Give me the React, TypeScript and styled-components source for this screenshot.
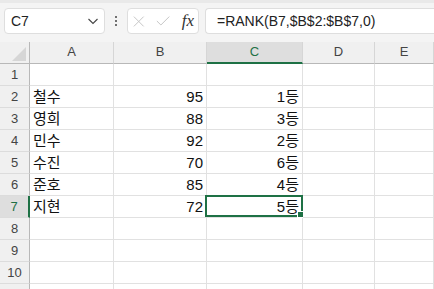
import React from 'react';
import styled, { createGlobalStyle, css } from 'styled-components';

const GREEN = '#1e7145';

const GlobalStyle = createGlobalStyle`
    body {
        margin: 0;
        background: #ffffff;
        font-family: "Liberation Sans", "Noto Sans CJK KR", sans-serif;
        overflow: hidden;
    }
`;

const Toolbar = styled.div`
    display: flex;
    align-items: flex-start;
    padding: 5px 0 0 4px;
    box-sizing: border-box;
    height: 42px;
    border-top: 3px solid #e9e9e9;
    background: #f4f4f4;
`;

const Box = styled.div`
    display: flex;
    align-items: center;
    height: 26px;
    box-sizing: border-box;
    background: #ffffff;
    border: 1px solid #dedede;
    border-radius: 4px;
`;

const NameBox = styled(Box)`
    width: 101px;
    justify-content: space-between;
    padding: 0 4px 0 6px;
    font-size: 14px;
    color: #222;
`;

const Dots = styled.div`
    width: 22px;
    height: 26px;
    display: flex;
    flex-direction: column;
    align-items: center;
    justify-content: center;
    gap: 2px;

    span {
        width: 2px;
        height: 2px;
        background: #444;
        border-radius: 1px;
    }
`;

const FormulaButtons = styled(Box)`
    width: 72px;
    padding: 0 4px 0 5px;
    gap: 11px;
`;

const Fx = styled.span`
    font-family: "Liberation Serif", serif;
    font-style: italic;
    font-size: 17px;
    color: #333;
    margin-left: 1px;
`;

const FormulaInput = styled(Box)`
    flex: 1;
    margin-left: 6px;
    border-right: none;
    border-radius: 4px 0 0 4px;
    padding-left: 11px;
    font-size: 14px;
    color: #222;
`;

const Sheet = styled.div`
    display: grid;
    grid-template-columns: 30px 84px 93px 96px 72px 1fr;
    grid-auto-rows: 22px;
`;

const Cell = styled.div<{ $align?: 'left' | 'right' }>`
    position: relative;
    box-sizing: border-box;
    border-right: 1px solid #e1e1e1;
    border-bottom: 1px solid #e1e1e1;
    font-size: 15px;
    line-height: 21px;
    color: #111;
    white-space: nowrap;
    text-align: ${(p) => p.$align || 'left'};
    padding: 0 3px;
`;

const Selection = styled.div`
    position: absolute;
    top: -1px;
    left: -2px;
    right: -1px;
    bottom: 0;
    border: 2px solid ${GREEN};
    pointer-events: none;

    &::after {
        content: '';
        position: absolute;
        right: -3px;
        bottom: -3px;
        width: 7px;
        height: 7px;
        box-sizing: border-box;
        background: ${GREEN};
        border: 1px solid #ffffff;
    }
`;

const headerBase = css`
    box-sizing: border-box;
    background: #f0f0f0;
    font-size: 13px;
    color: #444;
    text-align: center;
`;

const ColHeader = styled.div<{ $active?: boolean }>`
    ${headerBase};
    line-height: 20px;
    border-right: 1px solid #d6d6d6;
    border-bottom: 1px solid #b8b8b8;
    ${(p) =>
        p.$active &&
        css`
            background: #dedede;
            color: ${GREEN};
            border-bottom: 2px solid ${GREEN};
        `}
`;

const Corner = styled.div`
    ${headerBase};
    position: relative;
    border-right: 1px solid #b8b8b8;
    border-bottom: 1px solid #b8b8b8;

    svg {
        position: absolute;
        right: 3px;
        bottom: 2px;
    }
`;

const RowHeader = styled.div<{ $active?: boolean }>`
    ${headerBase};
    line-height: 22px;
    border-right: 1px solid #b8b8b8;
    border-bottom: 1px solid #dcdcdc;
    ${(p) =>
        p.$active &&
        css`
            background: #dedede;
            color: ${GREEN};
            border-right: 2px solid ${GREEN};
        `}
`;

const columns = ['A', 'B', 'C', 'D', 'E'];

const data: [string, number, string][] = [
    ['철수', 95, '1등'],
    ['영희', 88, '3등'],
    ['민수', 92, '2등'],
    ['수진', 70, '6등'],
    ['준호', 85, '4등'],
    ['지현', 72, '5등'],
];

// the 11th row only peeks in at the bottom edge, its number is below the fold
const VISIBLE_ROWS = 10;
const ROW_COUNT = 11;

const App = () => {
    const rows = Array.from({ length: ROW_COUNT }, (_, i) => i + 1);

    return (
        <>
            <GlobalStyle />
            <Toolbar>
                <NameBox>
                    <span>C7</span>
                    <svg width="14" height="14" viewBox="0 0 14 14">
                        <path d="M2.5 5 L7 9.5 L11.5 5" fill="none" stroke="#444" strokeWidth="1.1" />
                    </svg>
                </NameBox>
                <Dots>
                    <span />
                    <span />
                    <span />
                </Dots>
                <FormulaButtons>
                    <svg width="13" height="13" viewBox="0 0 13 13">
                        <path d="M1 1 L12 12 M12 1 L1 12" stroke="#c4c4c4" strokeWidth="1.1" fill="none" />
                    </svg>
                    <svg width="16" height="12" viewBox="0 0 16 12">
                        <path d="M1 6 L5.5 10.5 L15 1" stroke="#c4c4c4" strokeWidth="1.1" fill="none" />
                    </svg>
                    <Fx>fx</Fx>
                </FormulaButtons>
                <FormulaInput>=RANK(B7,$B$2:$B$7,0)</FormulaInput>
            </Toolbar>
            <Sheet>
                <Corner>
                    <svg width="14" height="14" viewBox="0 0 14 14">
                        <polygon points="14,0 14,14 0,14" fill="#d6d6d6" />
                    </svg>
                </Corner>
                {columns.map((c) => (
                    <ColHeader key={c} $active={c === 'C'}>
                        {c}
                    </ColHeader>
                ))}
                {rows.map((r) => {
                    const item = r >= 2 && r <= 7 ? data[r - 2] : null;
                    return (
                        <React.Fragment key={r}>
                            <RowHeader $active={r === 7}>{r <= VISIBLE_ROWS ? r : ''}</RowHeader>
                            <Cell>{item?.[0]}</Cell>
                            <Cell $align="right">{item?.[1]}</Cell>
                            <Cell $align="right">
                                {item?.[2]}
                                {r === 7 && <Selection />}
                            </Cell>
                            <Cell />
                            <Cell />
                        </React.Fragment>
                    );
                })}
            </Sheet>
        </>
    );
};

export default App;
